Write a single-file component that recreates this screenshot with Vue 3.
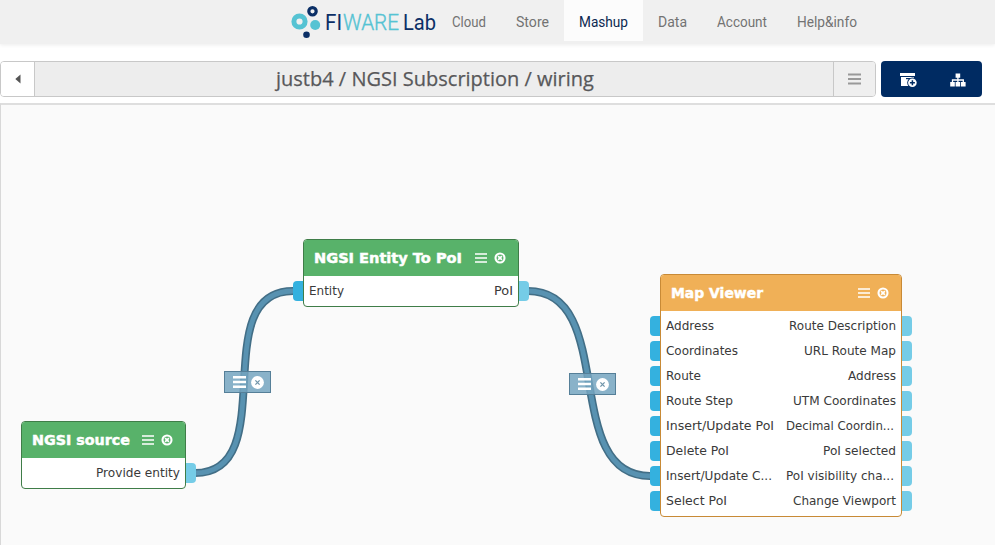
<script setup>
const nav = [
  { label: 'Cloud', width: 34 },
  { label: 'Store', width: 33 },
  { label: 'Mashup', width: 49, active: true },
  { label: 'Data', width: 29 },
  { label: 'Account', width: 50 },
  { label: 'Help&info', width: 60 }
]

const nodes = [
  {
    title: 'NGSI source', titleWidth: 98, kind: 'operator', x: 21, y: 421, w: 165,
    inputs: [],
    outputs: [['Provide entity', 84]]
  },
  {
    title: 'NGSI Entity To PoI', titleWidth: 148, kind: 'operator', x: 303, y: 239, w: 216,
    inputs: [['Entity', 35]],
    outputs: [['PoI', 19]]
  },
  {
    title: 'Map Viewer', titleWidth: 92, kind: 'widget', x: 660, y: 274, w: 242,
    inputs: [
      ['Address', 48], ['Coordinates', 72], ['Route', 35], ['Route Step', 67],
      ['Insert/Update PoI', 108], ['Delete PoI', 63], ['Insert/Update C...', 106], ['Select PoI', 61]
    ],
    outputs: [
      ['Route Description', 107], ['URL Route Map', 92], ['Address', 48], ['UTM Coordinates', 103],
      ['Decimal Coordin...', 108], ['PoI selected', 73], ['PoI visibility cha...', 108], ['Change Viewport', 103]
    ]
  }
]

const wires = [
  'M195 473 C283 473 205 291 293 291',
  'M528 291 C618 291 560 476 650 476'
]

const wireTools = [{ x: 224, y: 371 }, { x: 569, y: 373 }]
</script>

<template>
  <div class="page">
    <header class="top">
      <svg class="logo" width="150" height="42" viewBox="0 0 150 42">
        <circle cx="13.5" cy="21.5" r="5.6" fill="none" stroke="#56c3d3" stroke-width="5" />
        <circle cx="26.5" cy="11.3" r="3.7" fill="none" stroke="#0b2f66" stroke-width="3.2" />
        <circle cx="29.2" cy="25" r="5" fill="#56c3d3" />
        <circle cx="20.5" cy="34.8" r="3.3" fill="#0b2f66" />
        <text class="brand navy" x="39" y="30" textLength="17" lengthAdjust="spacingAndGlyphs">FI</text>
        <text class="brand cyan" x="57" y="30" textLength="56" lengthAdjust="spacingAndGlyphs">WARE</text>
        <text class="brand navy" x="117" y="30" textLength="33" lengthAdjust="spacingAndGlyphs">Lab</text>
      </svg>
      <nav class="nav">
        <a v-for="n in nav" :key="n.label" class="tab" :class="{ active: n.active }">
          <svg :width="n.width" height="41">
            <text x="0" y="27" :textLength="n.width" lengthAdjust="spacingAndGlyphs">{{ n.label }}</text>
          </svg>
        </a>
      </nav>
    </header>

    <div class="toolbar">
      <div class="crumbs">
        <button class="back">
          <svg width="6" height="10" viewBox="0 0 6 10"><path d="M5.5 .5V9.5L.3 5z" fill="#555" /></svg>
        </button>
        <div class="path">
          <svg width="319" height="34">
            <text x="0" y="24" textLength="318" lengthAdjust="spacingAndGlyphs">justb4 / NGSI Subscription / wiring</text>
          </svg>
        </div>
        <button class="menu">
          <svg width="13" height="12" viewBox="0 0 13 12"><path d="M0 1.5H13M0 6H13M0 10.5H13" stroke="#999" stroke-width="2" /></svg>
        </button>
      </div>
      <div class="actions">
        <button>
          <svg width="18" height="16" viewBox="0 0 18 16">
            <path d="M0 1H15V4H0zM1 5H13.8V14H1z" fill="#fff" />
            <path d="M6 6.6H10" stroke="#002b62" stroke-width="1.2" />
            <circle cx="12.4" cy="10.8" r="5.2" fill="#002b62" />
            <circle cx="12.4" cy="10.8" r="4.3" fill="#fff" />
            <path d="M12.4 8.3V13.3M9.9 10.8H14.9" stroke="#002b62" stroke-width="1.5" />
          </svg>
        </button>
        <button>
          <svg width="16" height="14" viewBox="0 0 16 14">
            <path d="M5.6 .5h4.6v4.3H5.6zM.2 9h4.6v4.4H.2zM5.6 9h4.6v4.4H5.6zM11 9h4.6v4.4H11z" fill="#fff" />
            <path d="M7.9 4V10M2.5 9.5V7H13.3V9.5" fill="none" stroke="#fff" stroke-width="1.3" />
          </svg>
        </button>
      </div>
    </div>

    <main class="canvas"></main>

    <div class="board">
      <svg class="wires" width="995" height="545">
        <g v-for="d in wires" :key="d" fill="none">
          <path :d="d" stroke="#426e86" stroke-width="8" />
          <path :d="d" stroke="#5892b1" stroke-width="4.8" />
        </g>
      </svg>

      <section
        v-for="n in nodes" :key="n.title" class="node" :class="n.kind"
        :style="{ left: n.x + 'px', top: n.y + 'px', width: n.w + 'px' }"
      >
        <div class="head">
          <svg class="title" :width="n.titleWidth" height="20">
            <text x="0" y="15" :textLength="n.titleWidth" lengthAdjust="spacingAndGlyphs">{{ n.title }}</text>
          </svg>
          <svg class="lines" width="12" height="10" viewBox="0 0 12 10"><path d="M0 1H12M0 5H12M0 9H12" stroke="#fff" stroke-width="1.7" /></svg>
          <svg width="12" height="12" viewBox="0 0 12 12">
            <circle cx="6" cy="6" r="4.5" fill="none" stroke="#fff" stroke-width="2.1" />
            <path d="M4.1 4.1L7.9 7.9M7.9 4.1L4.1 7.9" stroke="#fff" stroke-width="1.7" />
          </svg>
        </div>
        <div class="ports">
          <div class="col in">
            <div v-for="p in n.inputs" :key="p[0]" class="port">
              <i class="plug"></i>
              <svg :width="p[1]" height="20"><text x="0" y="14" :textLength="p[1]" lengthAdjust="spacingAndGlyphs">{{ p[0] }}</text></svg>
            </div>
          </div>
          <div class="col out">
            <div v-for="p in n.outputs" :key="p[0]" class="port" :class="{ cut: p[0].endsWith('...') }">
              <svg :width="p[1]" height="20"><text x="0" y="14" :textLength="p[1]" lengthAdjust="spacingAndGlyphs">{{ p[0] }}</text></svg>
              <i class="plug"></i>
            </div>
          </div>
        </div>
      </section>

      <div v-for="t in wireTools" :key="t.x" class="tools" :style="{ left: t.x + 'px', top: t.y + 'px' }">
        <svg width="13" height="12" viewBox="0 0 13 12"><path d="M0 1.3H13M0 6H13M0 10.7H13" stroke="#fff" stroke-width="2.6" /></svg>
        <svg width="13" height="13" viewBox="0 0 13 13">
          <circle cx="6.5" cy="6.5" r="6.4" fill="#fff" />
          <path d="M4.4 4.4L8.6 8.6M8.6 4.4L4.4 8.6" stroke="#7095aa" stroke-width="1.3" />
        </svg>
      </div>
    </div>
  </div>
</template>

<style>
body { margin: 0; background: #fff; }
</style>

<style scoped>
.page { position: relative; width: 995px; height: 545px; overflow: hidden; display: flex; flex-direction: column; background: #fff; font-family: "DejaVu Sans", sans-serif; box-sizing: border-box; }
.page * { box-sizing: border-box; }
svg { display: block; flex: none; overflow: visible; }
button { border: 0; padding: 0; margin: 0; background: none; display: flex; align-items: center; justify-content: center; }
.top { height: 44px; flex: none; background: #f0f0f0; box-shadow: 0 1px 4px rgba(0, 0, 0, .08); display: flex; align-items: flex-start; padding-left: 286px; }
.brand { font-family: Roboto, sans-serif; font-size: 22.5px; }
.navy { fill: #0b2f66; }
.cyan { fill: #56c3d3; stroke: #56c3d3; stroke-width: .4px; font-weight: 300; }
.nav { display: flex; margin-left: 1px; }
.tab { padding: 0 15px; height: 41px; }
.tab.active { background: #fcfcfc; }
.tab text { font-family: Roboto, sans-serif; font-size: 15.5px; fill: #737373; }
.tab.active text { fill: #0b2850; }
.toolbar { display: flex; gap: 5px; padding-top: 17px; height: 59px; flex: none; }
.crumbs { width: 876px; height: 36px; display: flex; border: 1px solid #c8c8c8; border-radius: 4px; overflow: hidden; }
.back { width: 34px; border-right: 1px solid #c8c8c8; background: #fff; }
.path { flex: 1; background: #ededed; display: flex; padding-left: 241px; }
.path text { font-family: "Open Sans", sans-serif; font-size: 20.5px; fill: #58585a; stroke: #58585a; stroke-width: .25px; }
.menu { width: 42px; border-left: 1px solid #c8c8c8; background: #efefef; }
.actions { width: 101px; height: 36px; border-radius: 4px; background: #002b62; display: flex; }
.actions button { flex: 1; padding: 2px 0 0 3px; }
.actions button + button { padding: 2px 0 0 0; }
.canvas { flex: 1; background: #fafafa; border-top: 2px solid #dedede; border-left: 1px solid #d8d8d8; }
.board { position: absolute; inset: 0; }
.wires { position: absolute; left: 0; top: 0; }
.node { position: absolute; border: 1px solid #3f7d48; border-radius: 4px; background: #fff; }
.head { height: 36px; padding: 0 12px 0 10px; display: flex; align-items: center; background: #58b26a; border-radius: 3px 3px 0 0; }
.widget { border-color: #c88a36; }
.widget .head { background: #f0b057; }
.title { margin-right: auto; }
.title text { font-size: 13.5px; font-weight: bold; fill: #fff; stroke: #fff; stroke-width: .45px; }
.lines { margin-right: 7px; }
.ports { display: flex; justify-content: space-between; padding: 5px 0; }
.col { display: flex; flex-direction: column; gap: 5px; }
.port { display: flex; gap: 6px; height: 20px; }
.port text { font-size: 12.3px; fill: #3a3a3a; }
.out .port { justify-content: flex-end; }
.out .cut svg { margin-right: 2px; }
.plug { width: 10px; height: 20px; flex: none; }
.out .plug { margin-right: -11px; background: #75cce7; border-radius: 0 4px 4px 0; }
.in .plug { margin-left: -11px; background: #34b1df; border-radius: 4px 0 0 4px; }
.tools { position: absolute; width: 47px; height: 22px; border: 1px solid #557f98; background: rgba(116, 164, 191, .85); display: flex; align-items: center; gap: 5px; padding-left: 8px; }
</style>
